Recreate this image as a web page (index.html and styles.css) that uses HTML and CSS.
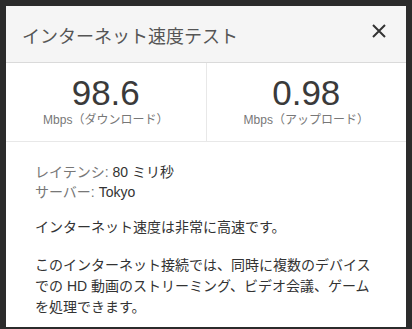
FILE: index.html
```html
<!DOCTYPE html>
<html lang="ja">
<head>
    <meta charset="UTF-8">
    <title>インターネット速度テスト</title>
    <link rel="stylesheet" href="styles.css">
</head>
<body>
    <div class="dialog">
        <div class="header">
            <span class="title">インターネット速度テスト</span>
            <span class="close">
                <svg width="14" height="14" viewBox="0 0 14 14">
                    <path d="M1 1L13 13M13 1L1 13" stroke="#333" stroke-width="2" fill="none"/>
                </svg>
            </span>
        </div>

        <div class="stats">
            <div class="stat">
                <div class="value">98.6</div>
                <div class="unit">Mbps（ダウンロード）</div>
            </div>
            <div class="stat">
                <div class="value">0.98</div>
                <div class="unit">Mbps（アップロード）</div>
            </div>
        </div>

        <div class="details">
            <div class="meta">
                <div><span class="label">レイテンシ:</span> 80 ミリ秒</div>
                <div><span class="label">サーバー:</span> Tokyo</div>
            </div>
            <p>インターネット速度は非常に高速です。</p>
            <p>このインターネット接続では、同時に複数のデバイスでの HD 動画のストリーミング、ビデオ会議、ゲームを処理できます。</p>
        </div>
    </div>
</body>
</html>
```

FILE: styles.css
```css
body {
    margin: 0;
    background-color: #2b2b2b;
    font-family: "Liberation Sans", Arial, "Noto Sans CJK JP", sans-serif;
    color: #333;
}
.dialog {
    width: 400px;
    height: 321px;
    margin: 6px;
    background: white;
    overflow: hidden;
}
.header {
    height: 56px;
    display: flex;
    align-items: center;
    justify-content: space-between;
    padding: 0 20px 0 16px;
    background-color: #f5f5f5;
    border-bottom: 1px solid #dadada;
}
.title {
    font-size: 18px;
    color: #555;
    padding-top: 2px;
}
.close {
    display: flex;
    margin-top: -6px;
}
.stats {
    display: flex;
    height: 78px;
    border-bottom: 1px solid #e8e8e8;
}
.stat {
    flex: 1;
    text-align: center;
    padding-top: 11px;
}
.stat + .stat {
    border-left: 1px solid #e8e8e8;
}
.value {
    font-size: 35px;
    line-height: 38px;
    color: #3a3a3a;
}
.unit {
    font-size: 12px;
    line-height: 16px;
    color: #777;
}
.details {
    padding: 20px 29px 0 29px;
    font-size: 14px;
    color: #333;
}
.meta {
    line-height: 20px;
}
.label {
    color: #777;
}
.details p {
    margin: 15px 0 0 0;
    line-height: 21px;
}
.details p + p {
    margin-top: 17px;
}
```
